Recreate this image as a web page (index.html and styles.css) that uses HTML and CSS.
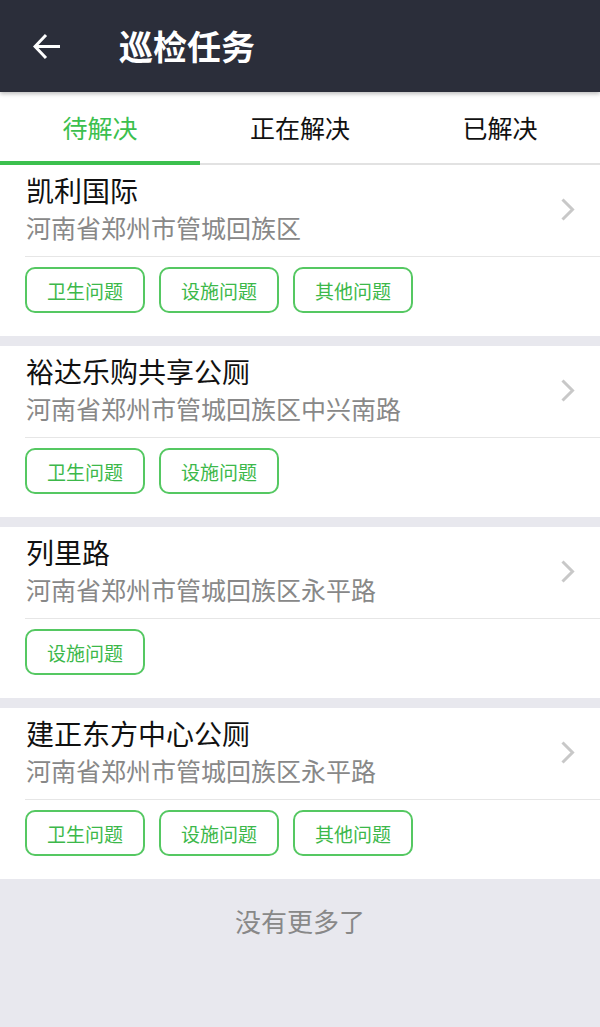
FILE: index.html
```html
<!DOCTYPE html>
<html lang="zh-CN">
<head>
<meta charset="utf-8">
<title>巡检任务</title>
<link rel="stylesheet" href="styles.css">
</head>
<body>
<div class="app">
  <header class="topbar">
    <svg class="back" width="28" height="28" viewBox="0 0 28 28"><path d="M13 2 L2 13.5 L13 25 M2 13.5 H27" fill="none" stroke="#fff" stroke-width="3"/></svg>
    <h1 class="title">巡检任务</h1>
  </header>
  <nav class="tabs">
    <div class="tab active">待解决</div>
    <div class="tab">正在解决</div>
    <div class="tab">已解决</div>
  </nav>
  <main class="list">
    <section class="card">
      <div class="head">
        <div class="info">
          <div class="name">凯利国际</div>
          <div class="addr">河南省郑州市管城回族区</div>
        </div>
        <svg class="chev" width="14" height="23" viewBox="0 0 14 23"><path d="M1.5 1.5 L11.5 11.5 L1.5 21.5" fill="none" stroke="#c8c8c8" stroke-width="3"/></svg>
      </div>
      <div class="tags"><span class="tag">卫生问题</span><span class="tag">设施问题</span><span class="tag">其他问题</span></div>
    </section>
    <section class="card">
      <div class="head">
        <div class="info">
          <div class="name">裕达乐购共享公厕</div>
          <div class="addr">河南省郑州市管城回族区中兴南路</div>
        </div>
        <svg class="chev" width="14" height="23" viewBox="0 0 14 23"><path d="M1.5 1.5 L11.5 11.5 L1.5 21.5" fill="none" stroke="#c8c8c8" stroke-width="3"/></svg>
      </div>
      <div class="tags"><span class="tag">卫生问题</span><span class="tag">设施问题</span></div>
    </section>
    <section class="card">
      <div class="head">
        <div class="info">
          <div class="name">列里路</div>
          <div class="addr">河南省郑州市管城回族区永平路</div>
        </div>
        <svg class="chev" width="14" height="23" viewBox="0 0 14 23"><path d="M1.5 1.5 L11.5 11.5 L1.5 21.5" fill="none" stroke="#c8c8c8" stroke-width="3"/></svg>
      </div>
      <div class="tags"><span class="tag">设施问题</span></div>
    </section>
    <section class="card">
      <div class="head">
        <div class="info">
          <div class="name">建正东方中心公厕</div>
          <div class="addr">河南省郑州市管城回族区永平路</div>
        </div>
        <svg class="chev" width="14" height="23" viewBox="0 0 14 23"><path d="M1.5 1.5 L11.5 11.5 L1.5 21.5" fill="none" stroke="#c8c8c8" stroke-width="3"/></svg>
      </div>
      <div class="tags"><span class="tag">卫生问题</span><span class="tag">设施问题</span><span class="tag">其他问题</span></div>
    </section>
  </main>
  <footer class="nomore">没有更多了</footer>
</div>
</body>
</html>
```
FILE: styles.css
```css
* { box-sizing: border-box; margin: 0; padding: 0; }
html, body { height: 100%; }
body {
  font-family: "Noto Sans CJK SC", "Noto Sans", sans-serif;
  background: #e8e8ee;
  width: 600px;
}
.app { display: flex; flex-direction: column; min-height: 1027px; }
.topbar {
  height: 92px;
  background: #2b2e3a;
  display: flex;
  align-items: center;
  padding-left: 33px;
  position: relative;
  z-index: 2;
  box-shadow: 0 2px 4px rgba(0,0,0,0.25);
}
.back { flex: none; margin-top: 1px; }
.title {
  color: #fff;
  font-size: 34px;
  font-weight: 700;
  margin-left: 58px;
  line-height: 40px;
}
.tabs {
  display: flex;
  height: 73px;
  background: #fff;
  border-bottom: 2px solid #e2e2e2;
}
.tab {
  flex: 1;
  display: flex;
  align-items: center;
  justify-content: center;
  font-size: 25px;
  color: #111;
  border-bottom: 4px solid transparent;
  margin-bottom: -2px;
}
.tab.active { color: #3cc04e; border-bottom-color: #3cc04e; }
.list { display: flex; flex-direction: column; gap: 10px; }
.card { background: #fff; padding: 7px 0 23px 25px; }
.head {
  display: flex;
  align-items: center;
  border-bottom: 1px solid #e6e6e6;
  padding-bottom: 11px;
}
.info { flex: 1; padding-left: 1px; }
.name { font-size: 28px; line-height: 36px; color: #111; }
.addr { font-size: 25px; line-height: 36px; color: #888; margin-top: 1px; }
.chev { flex: none; margin-right: 25px; margin-top: 2px; }
.tags { display: flex; gap: 14px; margin-top: 10px; }
.tag {
  width: 120px;
  height: 46px;
  border: 2px solid #55c862;
  border-radius: 10px;
  color: #3cb84a;
  font-size: 19px;
  display: flex;
  align-items: center;
  justify-content: center;
}
.nomore {
  flex: 1;
  text-align: center;
  font-size: 26px;
  color: #888;
  padding-top: 23px;
  line-height: 38px;
}
```
